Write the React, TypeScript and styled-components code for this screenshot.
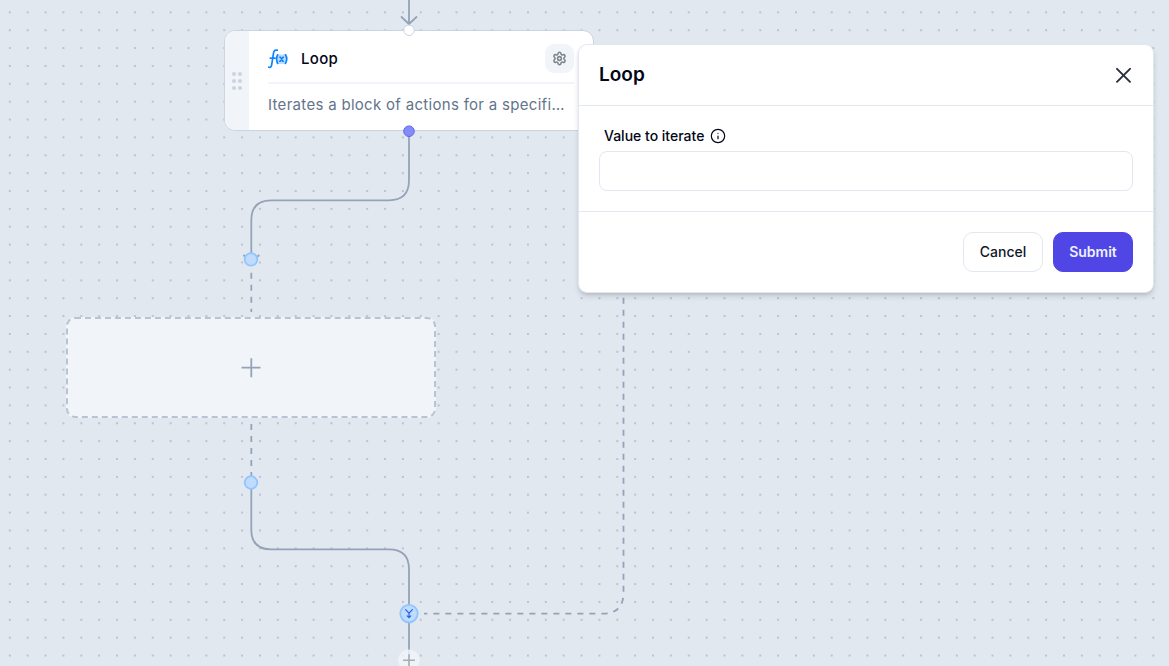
import React from "react";
import styled, { createGlobalStyle } from "styled-components";
import { Info, Settings } from "lucide-react";

const GlobalStyle = createGlobalStyle`
  *, *::before, *::after { box-sizing: border-box; }
  body { margin: 0; font-family: Inter, "Liberation Sans", sans-serif; color: #020617; }
  button, input { font: inherit; color: inherit; }
`;

const Canvas = styled.main`
  position: relative;
  min-height: 100vh;
  overflow: hidden;
  background: #e2e8f0;
`;

const Layer = styled.svg`
  position: absolute;
  inset: 0;
  width: 100%;
  height: 100%;
  pointer-events: none;
`;

const FlowNode = styled.article`
  position: absolute;
  left: 224px;
  top: 30px;
  width: 370px;
  height: 101px;
  display: flex;
  overflow: hidden;
  background: #fff;
  border: 1px solid #cbd5e1;
  border-radius: 11px;
`;

const DragHandle = styled.div`
  display: flex;
  align-items: center;
  justify-content: center;
  width: 24px;
  background: #f1f5f9;
`;

const NodeContent = styled.div`
  flex: 1;
  min-width: 0;
  padding: 0 19px;
`;

const NodeHeader = styled.header`
  display: flex;
  align-items: center;
  height: 53px;
  padding-top: 4px;
  border-bottom: 2px solid #f1f5f9;
`;

const NodeTitle = styled.h3`
  flex: 1;
  margin: 0 0 0 13px;
  font-size: 15px;
  font-weight: 500;
  line-height: 24px;
  letter-spacing: 0.02em;
`;

const SettingsButton = styled.button`
  display: grid;
  place-items: center;
  width: 29px;
  height: 29px;
  padding: 0;
  border: 0;
  border-radius: 9px;
  background: #f1f5f9;
  color: #80858f;
`;

const NodeText = styled.p`
  margin: 0;
  padding-top: 9px;
  white-space: nowrap;
  color: #64748b;
  font-size: 15px;
  line-height: 24px;
  letter-spacing: 0.02em;
`;

const Placeholder = styled.button`
  position: absolute;
  left: 66px;
  top: 317px;
  display: grid;
  place-items: center;
  width: 370px;
  height: 101px;
  padding: 0;
  border: 2px dashed #b8c4d4;
  border-radius: 9px;
  background: #f1f5f9;
`;

const Dialog = styled.form`
  position: absolute;
  top: 44px;
  right: 15px;
  width: 576px;
  background: #fff;
  border: 1px solid #e2e8f0;
  border-radius: 9px;
  box-shadow: 0 4px 6px -1px rgba(0, 0, 0, 0.14), 0 2px 4px -2px rgba(0, 0, 0, 0.14);
`;

const DialogHeader = styled.header`
  display: flex;
  align-items: center;
  justify-content: space-between;
  height: 61px;
  padding: 0 20px;
  border-bottom: 1px solid #e2e8f0;
`;

const DialogTitle = styled.h2`
  margin: 0;
  font-size: 19px;
  font-weight: 600;
  line-height: 28px;
`;

const CloseButton = styled.button`
  display: grid;
  place-items: center;
  width: 20px;
  height: 20px;
  padding: 0;
  border: 0;
  background: none;
`;

const Field = styled.div`
  padding: 20px;
  border-bottom: 1px solid #e2e8f0;
`;

const FieldLabel = styled.label`
  display: flex;
  align-items: center;
  gap: 6px;
  height: 20px;
  margin: 0 5px 5px;
  font-size: 14px;
  font-weight: 500;
  line-height: 20px;
`;

const TextInput = styled.input`
  display: block;
  width: 100%;
  height: 40px;
  padding: 0 12px;
  border: 1px solid #e2e8f0;
  border-radius: 8px;
  background: #fff;
  font-size: 14px;
`;

const DialogFooter = styled.footer`
  display: flex;
  justify-content: flex-end;
  gap: 10px;
  padding: 20px;
`;

const Button = styled.button<{ $primary?: boolean }>`
  width: 80px;
  height: 40px;
  padding: 0;
  border: 1px solid ${(p) => (p.$primary ? "#4f46e5" : "#e2e8f0")};
  border-radius: 10px;
  background: ${(p) => (p.$primary ? "#4f46e5" : "#fff")};
  color: ${(p) => (p.$primary ? "#eef2ff" : "#0f172a")};
  font-size: 14px;
  font-weight: ${(p) => (p.$primary ? 600 : 500)};
  line-height: 20px;
`;

function FunctionIcon() {
  return (
    <svg width="20" height="20" viewBox="0 0 20 20" fill="none" stroke="#0a84ff" strokeLinecap="round" aria-hidden="true">
      <rect x="8" y="5.6" width="11" height="9.4" rx="3" fill="#bfdbfe" stroke="none" />
      <path d="M9.2 1.2C6.7.6 5.9 2 5.5 4.2L3.8 15.1C3.4 17.7 2.5 18.7.8 18.2M2.4 9.2H7" strokeWidth="1.7" />
      <path d="M9.6 5.8Q7.6 10 9.6 14.4M17.5 5.8Q20 10 17.5 14.4" strokeWidth="1.7" />
      <path d="M11.8 8.2H12.4L14.8 12.2H15.4M15.4 8.2H14.9L12.3 12.2H11.7" strokeWidth="1.6" />
    </svg>
  );
}

function Grip() {
  return (
    <svg width="12" height="20" viewBox="0 0 12 20" fill="#cbd5e1" aria-hidden="true">
      {[3, 10, 17].map((y) => (
        <g key={y}>
          <circle cx="3" cy={y} r="2.1" />
          <circle cx="9" cy={y} r="2.1" />
        </g>
      ))}
    </svg>
  );
}

function Edges() {
  return (
    <Layer aria-hidden="true">
      <defs>
        <pattern id="dots" x="0.9" y="3.4" width="17.867" height="17.867" patternUnits="userSpaceOnUse">
          <circle cx="8.93" cy="8.93" r="0.8" fill="#91919a" />
        </pattern>
      </defs>
      <rect width="100%" height="100%" fill="url(#dots)" />
      <g fill="none" stroke="#94a3b8" strokeWidth="1.8">
        <path d="M409 0V24M401.5 17L409 24L416.5 17" strokeLinecap="round" strokeLinejoin="round" />
        <path d="M409 131V180.3Q409 200.3 389 200.3H271.3Q251.3 200.3 251.3 220.3V259" />
        <path d="M243.3 255L251.3 262L259.3 255" />
        <path d="M251.3 489V529.4Q251.3 549.4 271.3 549.4H389Q409 549.4 409 569.4V666" />
        <path d="M251.3 272.7V312" strokeDasharray="6 6" />
        <path d="M251.3 424V476" strokeDasharray="6 6" />
        <path d="M623.5 297.7V592.7Q623.5 613.7 602.5 613.7H424" strokeDasharray="6 6" />
      </g>
    </Layer>
  );
}

function Ports() {
  return (
    <Layer aria-hidden="true">
      <circle cx="409" cy="30.3" r="5.2" fill="#fff" stroke="#cbd5e1" />
      <circle cx="409" cy="131.2" r="5.3" fill="#818cf8" stroke="#6366f1" />
      <g fill="#bfdbfe" stroke="#93c5fd" strokeWidth="1.8">
        <circle cx="251" cy="259.4" r="6.3" />
        <circle cx="251" cy="482.5" r="6.3" />
        <circle cx="409" cy="613.6" r="8.7" />
      </g>
      <path
        d="M405.6 609.6L409 613.2L412.4 609.6M409 613.2V617.3M407.2 615.8L409 617.6L410.8 615.8"
        fill="none"
        stroke="#2563eb"
        strokeWidth="1.2"
        strokeLinecap="round"
      />
      <circle cx="409" cy="660.2" r="10.8" fill="#f1f5f9" fillOpacity="0.8" />
      <path d="M403 660.3H415M409 654.3V666" stroke="#a8adb5" strokeWidth="1.6" />
    </Layer>
  );
}

export default function App() {
  return (
    <>
      <GlobalStyle />
      <Canvas>
        <Edges />
        <FlowNode>
          <DragHandle>
            <Grip />
          </DragHandle>
          <NodeContent>
            <NodeHeader>
              <FunctionIcon />
              <NodeTitle>Loop</NodeTitle>
              <SettingsButton type="button" aria-label="Settings">
                <Settings size={15} strokeWidth={2.5} />
              </SettingsButton>
            </NodeHeader>
            <NodeText>Iterates a block of actions for a specifi…</NodeText>
          </NodeContent>
        </FlowNode>
        <Placeholder type="button" aria-label="Add action">
          <svg width="20" height="20" viewBox="0 0 20 20" stroke="#94a3b8" strokeWidth="1.8" aria-hidden="true">
            <path d="M0.5 9.7H19.5M10.3 0.2V19.2" />
          </svg>
        </Placeholder>
        <Ports />
        <Dialog onSubmit={(e) => e.preventDefault()}>
          <DialogHeader>
            <DialogTitle>Loop</DialogTitle>
            <CloseButton type="button" aria-label="Close">
              <svg width="16" height="16" viewBox="0 0 16 16" stroke="#292e3d" strokeWidth="1.9" strokeLinecap="round" aria-hidden="true">
                <path d="M2 1.8L15 14.8M15 1.8L2 14.8" />
              </svg>
            </CloseButton>
          </DialogHeader>
          <Field>
            <FieldLabel htmlFor="iterate-value">
              Value to iterate
              <Info size={16} strokeWidth={1.8} />
            </FieldLabel>
            <TextInput id="iterate-value" type="text" />
          </Field>
          <DialogFooter>
            <Button type="button">Cancel</Button>
            <Button type="submit" $primary>
              Submit
            </Button>
          </DialogFooter>
        </Dialog>
      </Canvas>
    </>
  );
}
